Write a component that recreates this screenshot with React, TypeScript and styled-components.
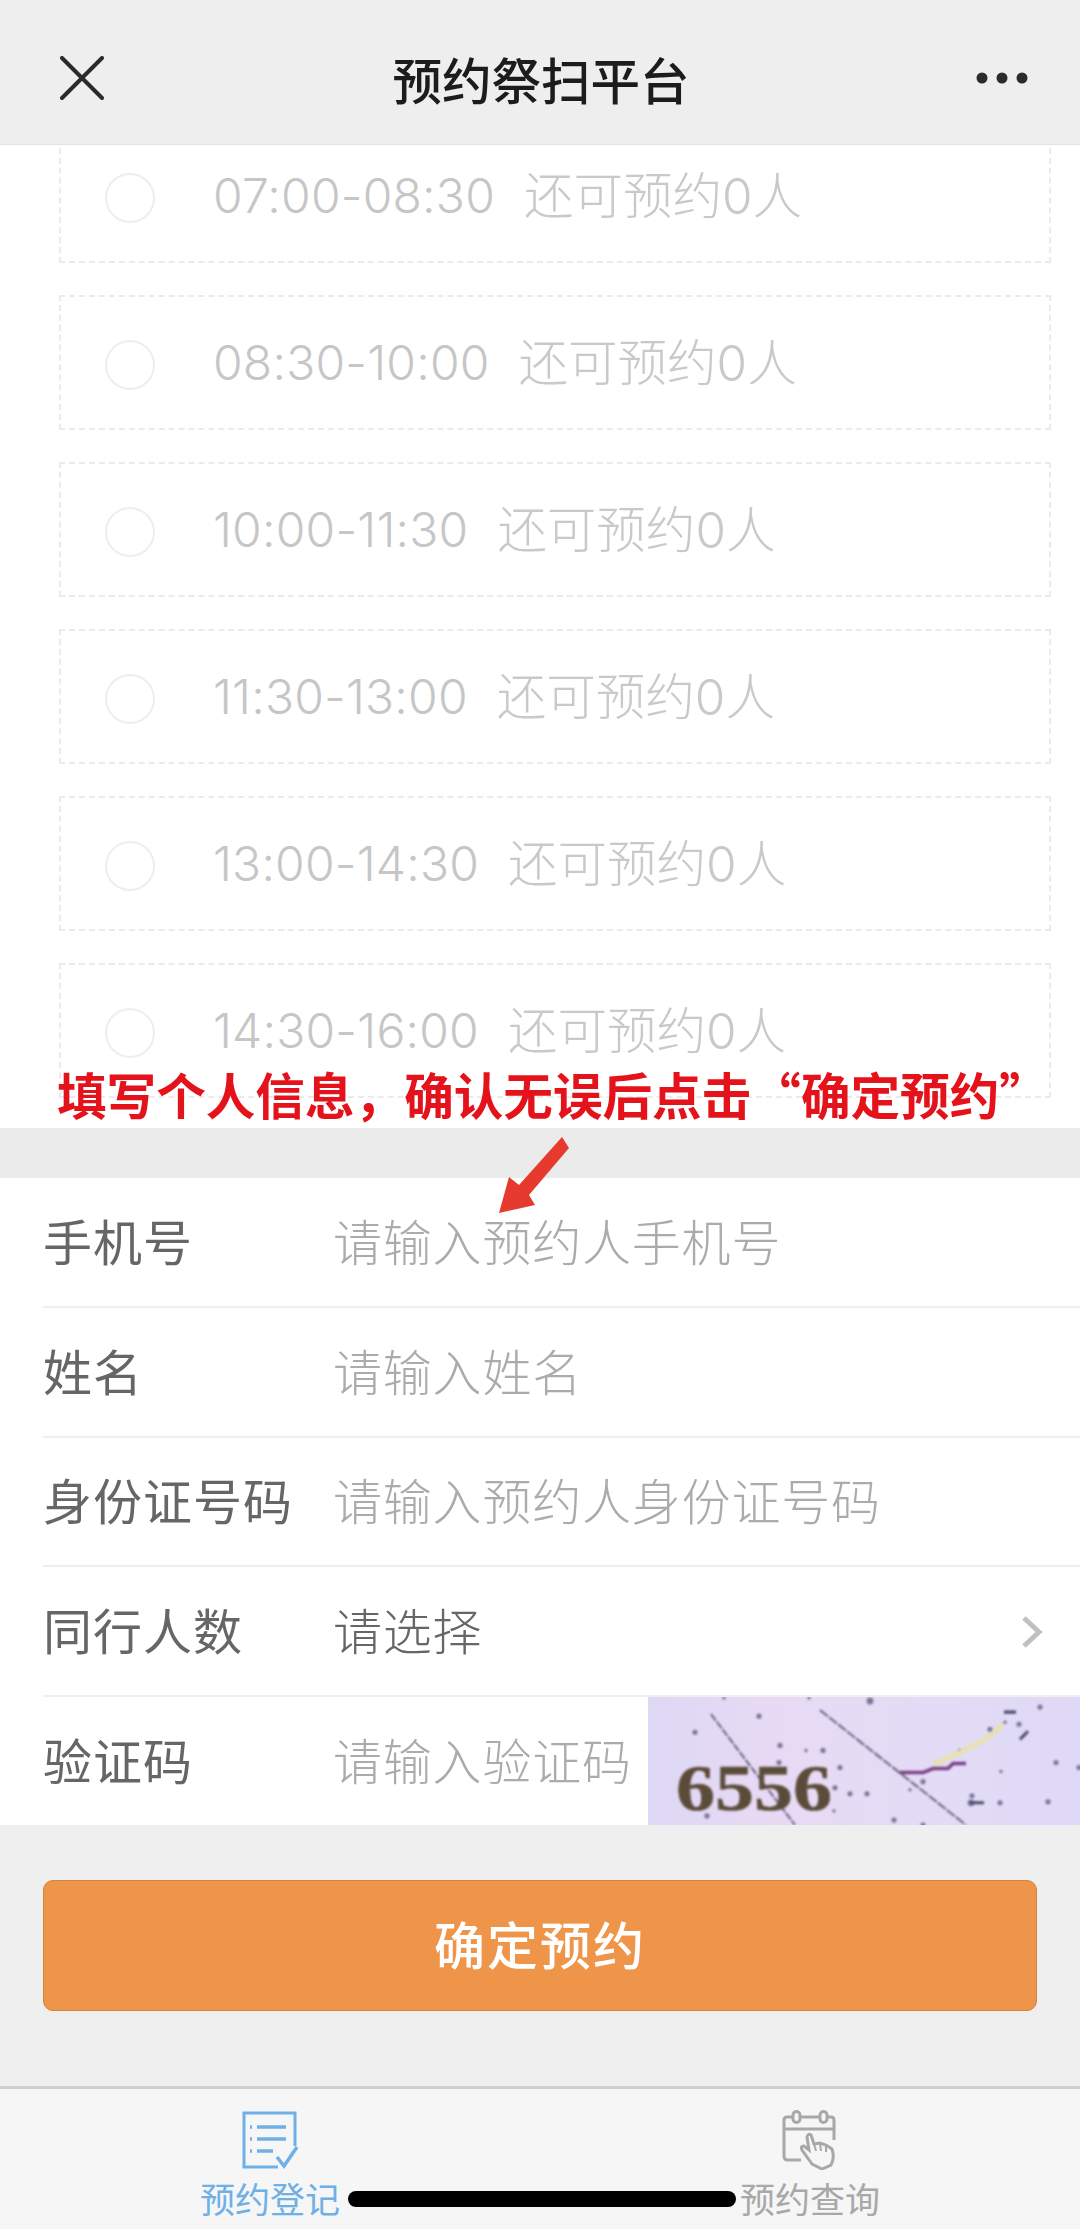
import styled, { createGlobalStyle } from 'styled-components'

const GlobalStyle = createGlobalStyle`
  html, body {
    margin: 0;
    padding: 0;
    background: #efefef;
  }
  * {
    box-sizing: border-box;
  }
`

const slots = [
  { time: '07:00-08:30', left: 0 },
  { time: '08:30-10:00', left: 0 },
  { time: '10:00-11:30', left: 0 },
  { time: '11:30-13:00', left: 0 },
  { time: '13:00-14:30', left: 0 },
  { time: '14:30-16:00', left: 0 },
]

const specks: [number, number, number][] = [
  [6, 30, 3], [63, 35, 3], [127, 19, 3], [92, 1, 2], [177, 1, 2], [148, 48, 3], [174, 53, 2], [191, 53, 3],
  [147, 65, 3], [208, 70, 3], [203, 90, 3], [218, 96, 3], [235, 96, 3], [202, 113, 2], [75, 118, 3], [262, 122, 3],
  [291, 84, 3], [278, 92, 2], [340, 98, 3], [339, 105, 4], [368, 105, 3], [328, 54, 3], [358, 32, 3], [387, 27, 3],
  [373, 25, 2], [408, 10, 3], [447, 70, 3], [369, 74, 2], [416, 104, 3], [424, 65, 3], [291, 127, 3], [238, 4, 4],
]

export default function App() {
  return (
    <>
      <GlobalStyle />
      <Screen>
        <Header>
          <HeaderIcon width="44" height="44" viewBox="0 0 44 44">
            <path d="M2 2 L42 42 M42 2 L2 42" stroke="#2b2b2b" strokeWidth="4" strokeLinecap="round" />
          </HeaderIcon>
          <Title>预约祭扫平台</Title>
          <HeaderIcon width="52" height="12" viewBox="0 0 52 12">
            <circle cx="6" cy="6" r="5.5" fill="#2b2b2b" />
            <circle cx="26" cy="6" r="5.5" fill="#2b2b2b" />
            <circle cx="46" cy="6" r="5.5" fill="#2b2b2b" />
          </HeaderIcon>
        </Header>

        <SlotList>
          {slots.map(slot => (
            <SlotRow key={slot.time}>
              <Radio />
              <SlotTime>{slot.time}</SlotTime>
              <SlotLeft>还可预约{slot.left}人</SlotLeft>
            </SlotRow>
          ))}
        </SlotList>

        <Band />

        <Form>
          <FormRow>
            <Label>手机号</Label>
            <Placeholder>请输入预约人手机号</Placeholder>
          </FormRow>
          <FormRow>
            <Label>姓名</Label>
            <Placeholder>请输入姓名</Placeholder>
          </FormRow>
          <FormRow>
            <Label>身份证号码</Label>
            <Placeholder>请输入预约人身份证号码</Placeholder>
          </FormRow>
          <FormRow>
            <Label>同行人数</Label>
            <SelectValue>请选择</SelectValue>
            <Chevron width="22" height="34" viewBox="0 0 22 34">
              <path d="M3 3 L18 17 L3 31" fill="none" stroke="#c0c0c0" strokeWidth="5" />
            </Chevron>
          </FormRow>
          <FormRow $last>
            <Label>验证码</Label>
            <Placeholder>请输入验证码</Placeholder>
            <Captcha viewBox="0 0 432 127" preserveAspectRatio="none">
              <defs>
                <linearGradient id="captchaBg" x1="0" x2="1" y1="0" y2="0">
                  <stop offset="0" stopColor="#ddd8f4" />
                  <stop offset="0.3" stopColor="#e8daf4" />
                  <stop offset="0.7" stopColor="#e2dcf6" />
                  <stop offset="1" stopColor="#dfd8f6" />
                </linearGradient>
              </defs>
              <rect width="432" height="127" fill="url(#captchaBg)" />
              <g filter="blur(0.9px)">
                {specks.map(([x, y, r]) => (
                  <circle key={`${x}-${y}`} cx={x - 16} cy={y} r={r * 0.85} fill="#55547a" opacity="0.75" />
                ))}
                <path d="M63 17 L147 127" stroke="#6a6484" strokeWidth="2" strokeDasharray="8 1.5" />
                <path d="M172 13 L318 127" stroke="#6a6484" strokeWidth="2" strokeDasharray="10 1.5" />
                <path d="M285 67 C310 55 335 48 355 27" stroke="#e8e0b0" strokeWidth="5" fill="none" />
                <path d="M252 75 L275 75 L285 71 L300 71 L305 66 L318 66" stroke="#7d3f86" strokeWidth="3.5" fill="none" />
                <path d="M322 105 L336 105 M356 15 L368 15 M372 42 L380 34" stroke="#4b4a6e" strokeWidth="3" />
                <CaptchaText x="28" y="112" textLength="156" lengthAdjust="spacingAndGlyphs">6556</CaptchaText>
              </g>
            </Captcha>
          </FormRow>
        </Form>

        <ButtonArea>
          <SubmitButton>确定预约</SubmitButton>
        </ButtonArea>

        <TabBar>
          <Tab $active>
            <svg width="58" height="60" viewBox="0 0 58 60" fill="none" stroke="#6fb0e6" strokeWidth="3">
              <path d="M54 36 V3 H3 V57 H37" />
              <path d="M16 17 H45 M16 29 H45 M16 41 H32" strokeWidth="3.5" />
              <path d="M9 17 H11 M9 29 H11 M9 41 H11" strokeWidth="3.5" />
              <path d="M36 47 L43 56 L56 37" strokeWidth="3.5" />
            </svg>
            <TabLabel>预约登记</TabLabel>
          </Tab>
          <Tab>
            <svg width="58" height="60" viewBox="0 0 58 60" fill="none" stroke="#a8a8a8" strokeWidth="3">
              <path d="M12 7 H6 Q3 7 3 10 V46 Q3 50 7 50 H20" />
              <path d="M20 7 H38 M46 7 H50 Q53 7 53 10 V30" />
              <path d="M3 19 H53" />
              <rect x="12" y="1.5" width="7" height="11" rx="3.5" />
              <rect x="39" y="1.5" width="7" height="11" rx="3.5" />
              <path d="M31 54 L21 40 Q19 36 23 36 L28 40 L26 27 Q27 23 30 25 L33 34 L39 33 L45 35 L51 39 Q54 48 50 55 L41 59 Z" fill="#f6f6f6" />
              <path d="M33 34 L35 41 M39 33 L40 41 M45 35 L45 42" strokeWidth="2" />
            </svg>
            <TabLabel>预约查询</TabLabel>
          </Tab>
          <HomeIndicator />
        </TabBar>

        <Annotation>填写个人信息，确认无误后点击“确定预约”</Annotation>
        <AnnotationArrow width="72" height="78" viewBox="0 0 72 78">
          <polygon points="64,0 71,11 31,58 37,68 1,76 11,40 21,48" fill="#e63a2e" />
        </AnnotationArrow>
      </Screen>
    </>
  )
}

const Screen = styled.div`
  position: relative;
  width: 1080px;
  height: 2229px;
  overflow: hidden;
  background: #efefef;
  font-family: Inter, "Noto Sans CJK SC", sans-serif;
`

const Header = styled.header`
  position: relative;
  z-index: 2;
  height: 145px;
  padding: 12px 52px 0 60px;
  display: flex;
  align-items: center;
  justify-content: space-between;
  background: #eeeeee;
  border-bottom: 1px solid #e2e2e2;
`

const HeaderIcon = styled.svg`
  display: block;
`

const Title = styled.h1`
  margin: 0 0 0 2px;
  font-family: "Noto Sans CJK SC", sans-serif;
  font-size: 49.5px;
  font-weight: 500;
  color: #1c1c1c;
`

const SlotList = styled.section`
  height: 983px;
  margin: 0;
  padding: 0 29px 0 59px;
  background: #ffffff;
  display: flex;
  flex-direction: column;
  gap: 32px;
  overflow: hidden;

  & > :first-child {
    margin-top: -17px;
  }
`

const SlotRow = styled.div`
  flex: 0 0 135px;
  display: flex;
  align-items: center;
  padding-left: 44px;
  border: 2px dashed #ebebeb;
`

const Radio = styled.span`
  flex: 0 0 50px;
  height: 50px;
  margin-top: 5px;
  margin-right: 58px;
  border: 2px solid #eeeeee;
  border-radius: 50%;
`

const SlotTime = styled.span`
  font-size: 48px;
  font-weight: 300;
  letter-spacing: 0.2px;
  color: #c6c6c6;
`

const SlotLeft = styled.span`
  margin-left: 29px;
  margin-top: -6px;
  font-size: 49.5px;
  font-weight: 300;
  color: #c9c9c9;
  white-space: nowrap;
`

const Band = styled.div`
  height: 50px;
  background: #ebebeb;
`

const Form = styled.section`
  height: 647px;
  background: #ffffff;
  padding-left: 43px;
`

const FormRow = styled.div<{ $last?: boolean }>`
  position: relative;
  height: ${props => (props.$last ? '128px' : '129.75px')};
  display: flex;
  align-items: center;
  padding-bottom: 5px;
  border-bottom: ${props => (props.$last ? 'none' : '2px solid #efefef')};
`

const Label = styled.span`
  flex: 0 0 290px;
  font-family: "Noto Sans CJK SC", sans-serif;
  font-size: 49px;
  letter-spacing: 1px;
  color: #666666;
`

const Placeholder = styled.span`
  font-family: "Noto Sans CJK SC", sans-serif;
  font-size: 49px;
  letter-spacing: 0.8px;
  font-weight: 300;
  color: #ababab;
  white-space: nowrap;
`

const SelectValue = styled(Placeholder)`
  color: #666666;
`

const Chevron = styled.svg`
  margin-left: auto;
  margin-right: 37px;
  margin-top: 7px;
`

const Captcha = styled.svg`
  position: absolute;
  right: 0;
  top: 0;
  width: 432px;
  height: 128px;
`

const CaptchaText = styled.text`
  font-family: "Liberation Serif", serif;
  font-size: 66px;
  font-weight: 700;
  fill: #5b4c3a;
  stroke: #5b4c3a;
  stroke-width: 0.6;
`

const ButtonArea = styled.div`
  height: 261px;
  padding: 55px 43px 0 43px;
`

const SubmitButton = styled.button`
  display: block;
  width: 100%;
  height: 131px;
  padding-bottom: 6px;
  border: 1px solid #d3823f;
  border-radius: 10px;
  background: #ef9549;
  color: #ffffff;
  font-family: "Noto Sans CJK SC", sans-serif;
  font-size: 51px;
  font-weight: 500;
  letter-spacing: 2px;
`

const TabBar = styled.nav`
  position: relative;
  height: 143px;
  display: flex;
  background: #f6f6f6;
  border-top: 3px solid #cfcfcf;
`

const Tab = styled.div<{ $active?: boolean }>`
  flex: 1;
  display: flex;
  flex-direction: column;
  align-items: center;
  padding-top: 21px;
  color: ${props => (props.$active ? '#6fb0e6' : '#a8a8a8')};
`

const TabLabel = styled.span`
  margin-top: 4px;
  font-family: "Noto Sans CJK SC", sans-serif;
  font-size: 35px;
  line-height: 48px;
`

const HomeIndicator = styled.div`
  position: absolute;
  left: 348px;
  bottom: 22px;
  width: 388px;
  height: 16px;
  border-radius: 8px;
  background: #000000;
`

const Annotation = styled.div`
  position: absolute;
  left: 57px;
  top: 1059px;
  font-family: "Noto Sans CJK SC", sans-serif;
  font-size: 49.6px;
  line-height: 68px;
  font-weight: 700;
  color: #e4121a;
  white-space: nowrap;
`

const AnnotationArrow = styled.svg`
  position: absolute;
  left: 498px;
  top: 1137px;
`
